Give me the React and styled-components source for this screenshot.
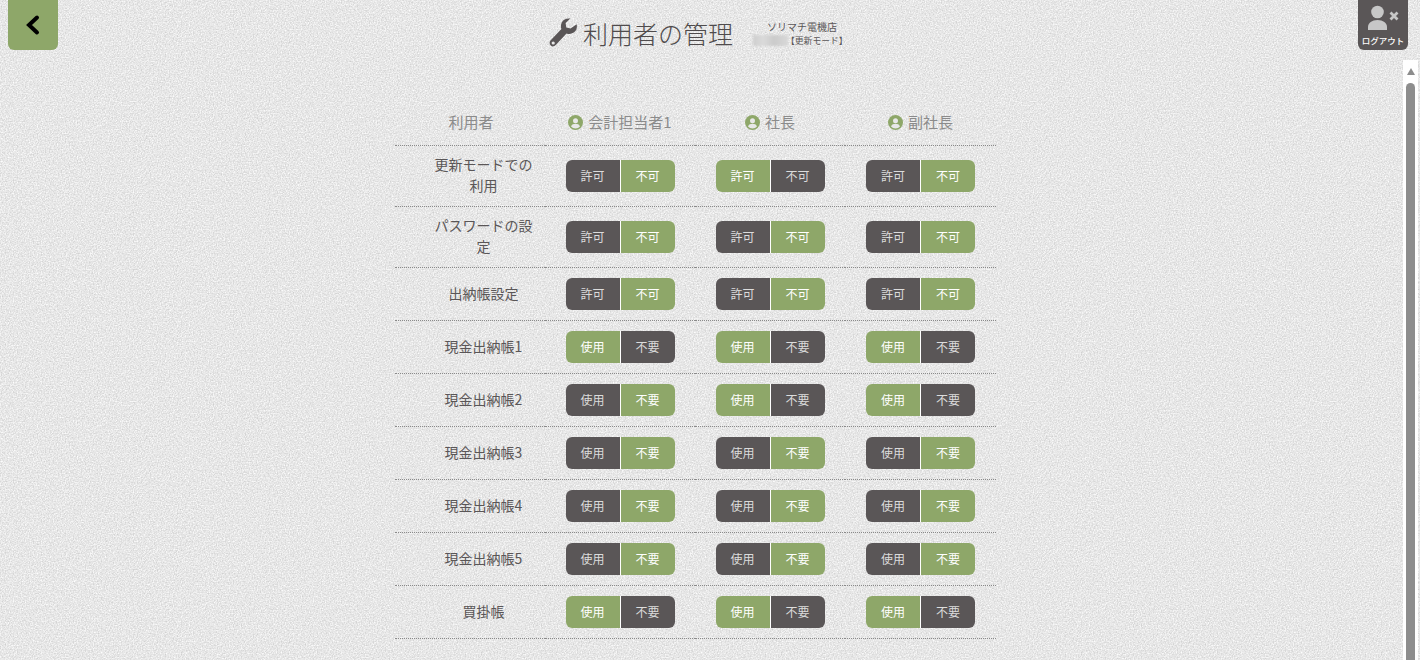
import React from "react";
import styled, { createGlobalStyle } from "styled-components";

const noise = `url("data:image/svg+xml,%3Csvg xmlns='http://www.w3.org/2000/svg' width='300' height='300'%3E%3Cfilter id='n' color-interpolation-filters='sRGB'%3E%3CfeTurbulence type='fractalNoise' baseFrequency='.75' numOctaves='3' stitchTiles='stitch'/%3E%3CfeColorMatrix values='.26 0 0 0 .775 .26 0 0 0 .775 .26 0 0 0 .775 0 0 0 0 1'/%3E%3C/filter%3E%3Crect width='300' height='300' filter='url(%23n)'/%3E%3C/svg%3E")`;

const Global = createGlobalStyle`
  html, body { margin: 0; height: 100%; overflow: hidden; }
  body {
    background: #e8e8e8 ${noise};
    font-family: "Noto Sans CJK JP", "Noto Sans", sans-serif;
    color: #5a5657;
  }
`;

const Page = styled.div`
  height: 660px;
  display: flex;
  flex-direction: column;
  overflow: hidden;
`;

const Header = styled.header`
  height: 60px;
  flex: none;
  display: flex;
  align-items: flex-start;
  padding: 0 12px 0 8px;
`;

const BackButton = styled.button`
  width: 50px;
  height: 50px;
  flex: none;
  border: 0;
  padding: 0;
  border-radius: 0 0 6px 6px;
  background: #8ea769;
  display: flex;
  align-items: center;
  justify-content: center;
`;

const TitleArea = styled.div`
  flex: 1;
  display: flex;
  align-items: flex-start;
  padding: 17px 0 0 490px;
`;

const Title = styled.h1`
  margin: 0;
  display: flex;
  align-items: center;
  gap: 5px;
  font-size: 25px;
  line-height: 32px;
  font-weight: 300;
  color: #4f4b4c;
  white-space: nowrap;
`;

const Shop = styled.div`
  margin: 4px 0 0 20px;
  width: 100px;
`;

const ShopName = styled.div`
  font-size: 10px;
  line-height: 12px;
  padding-left: 14px;
`;

const ModeLine = styled.div`
  display: flex;
  align-items: center;
  margin-top: 1px;
  font-size: 8.800px;
  line-height: 13px;
  white-space: nowrap;
`;

const Blur = styled.span`
  width: 35px;
  height: 11px;
  flex: none;
  margin-right: -2px;
  background: linear-gradient(90deg, #cfcfcf, #dadada 30%, #cbcbcb 60%, #d8d8d8);
  filter: blur(1px);
`;

const LogoutButton = styled.button`
  width: 50px;
  height: 50px;
  flex: none;
  border: 0;
  padding: 3px 0 0;
  border-radius: 0 0 6px 6px;
  background: #5a5657;
  color: #fff;
  font: 500 8.500px/10px "Noto Sans CJK JP", sans-serif;
  display: flex;
  flex-direction: column;
  align-items: center;
  gap: 4px;
  white-space: nowrap;
`;

const Body = styled.div`
  flex: 1;
  min-height: 0;
  display: flex;
`;

const Content = styled.main`
  flex: 1;
  padding: 40px 0 0 395px;
`;

const Table = styled.table`
  width: 601px;
  border-collapse: collapse;
  table-layout: fixed;
  font-size: 14px;
`;

const HeadCell = styled.th`
  height: 45px;
  padding: 0 0 2px ${(p) => (p.$first ? 2 : 0)}px;
  box-sizing: border-box;
  font-size: 15px;
  font-weight: 400;
  color: #8b8b8b;
  text-align: center;
  border-bottom: 1px dotted #8a8a8a;
`;

const HeadInner = styled.span`
  display: flex;
  justify-content: center;
  align-items: center;
  gap: 5px;
  padding-top: 1px;
`;

const UserIcon = styled.svg`
  flex: none;
  margin-top: 2px;
`;

const LabelCell = styled.td`
  height: ${(p) => p.$h}px;
  padding: 0 12px 1px 39px;
  box-sizing: border-box;
  line-height: 21px;
  text-align: center;
  color: #5a5657;
  border-bottom: 1px dotted #8a8a8a;
`;

const ToggleCell = styled.td`
  padding: 0;
  text-align: center;
  border-bottom: 1px dotted #8a8a8a;
`;

const Toggle = styled.div`
  width: 109px;
  height: 32px;
  margin: 0 auto;
  display: flex;
  gap: 1px;
  border-radius: 6px;
  overflow: hidden;
  background: #fff;
`;

const ToggleOption = styled.span`
  flex: 1;
  display: flex;
  align-items: center;
  justify-content: center;
  font-size: 12px;
  line-height: 30px;
  background: ${(p) => (p.$on ? "#8ea769" : "#5a5657")};
  color: ${(p) => (p.$on ? "#fff" : "#dcdcdc")};
`;

const Scrollbar = styled.div`
  width: 15px;
  flex: none;
  margin-right: 2px;
  background: #fff;
  display: flex;
  flex-direction: column;
  align-items: center;
  padding-top: 8px;
  gap: 8px;
`;

const ScrollArrow = styled.div`
  width: 0;
  height: 0;
  flex: none;
  border-left: 4.500px solid transparent;
  border-right: 4.500px solid transparent;
  border-bottom: 7px solid #8d8d8d;
`;

const ScrollThumb = styled.div`
  flex: 1;
  width: 9px;
  border-radius: 4.500px 4.500px 0 0;
  background: #8d8d8d;
`;

const User = () => (
  <UserIcon width="15" height="15" viewBox="0 0 24 24" aria-hidden="true">
    <circle cx="12" cy="12" r="12" fill="#8ea769" />
    <circle cx="12" cy="9.2" r="4" fill="#e8e8e8" />
    <path d="M4.8 18.2c1-3 4-4.2 7.2-4.2s6.200 1.200 7.200 4.200A10 10 0 0 1 12 21.500a10 10 0 0 1-7.200-3.300z" fill="#e8e8e8" />
  </UserIcon>
);

const rows = [
  ["更新モードでの利用", 61, "許可", "不可", [0, 1, 0]],
  ["パスワードの設定", 61, "許可", "不可", [0, 0, 0]],
  ["出納帳設定", 53, "許可", "不可", [0, 0, 0]],
  ["現金出納帳1", 53, "使用", "不要", [1, 1, 1]],
  ["現金出納帳2", 53, "使用", "不要", [0, 1, 1]],
  ["現金出納帳3", 53, "使用", "不要", [0, 0, 0]],
  ["現金出納帳4", 53, "使用", "不要", [0, 0, 0]],
  ["現金出納帳5", 53, "使用", "不要", [0, 0, 0]],
  ["買掛帳", 53, "使用", "不要", [1, 1, 1]],
];

export default function App() {
  return (
    <>
      <Global />
      <Page>
        <Header>
          <BackButton aria-label="戻る">
            <svg width="20" height="26" viewBox="0 0 20 26">
              <path d="M14 5.500 6 13l8 7.500" fill="none" stroke="#000" strokeWidth="4" strokeLinecap="round" strokeLinejoin="miter" />
            </svg>
          </BackButton>
          <TitleArea>
            <Title>
              <svg width="30" height="30" viewBox="0 0 30 30" aria-hidden="true">
                <path fill="#5a5657" d="M28.700 6.300c.4 1.800.3 3.800-.5 5.500-1.800 3.600-6 5-9.700 3.600L7.500 27.300c-1.300 1.400-3.400 1.500-4.800.2-1.400-1.300-1.500-3.500-.2-4.900L13.400 11c-1.200-3.300-.1-7.100 2.800-9.200 1.800-1.300 4-1.700 6.100-1.200l-4.700 4.400.7 4.400 4.300 1.200z" />
                <circle cx="5.200" cy="25" r="1.600" fill="#e8e8e8" />
              </svg>
              利用者の管理
            </Title>
            <Shop>
              <ShopName>ソリマチ電機店</ShopName>
              <ModeLine>
                <Blur />
                【更新モード】
              </ModeLine>
            </Shop>
          </TitleArea>
          <LogoutButton>
            <svg width="36" height="28" viewBox="0 0 36 28" aria-hidden="true">
              <circle cx="12.500" cy="9" r="6.300" fill="#c7c7c7" />
              <path d="M3 27v-3c0-4 4-7 9.500-7s9.500 3 9.500 7v3z" fill="#c7c7c7" />
              <path d="M25.500 9.500l7 7M32.500 9.500l-7 7" stroke="#c7c7c7" strokeWidth="2.800" />
            </svg>
            ログアウト
          </LogoutButton>
        </Header>
        <Body>
          <Content>
            <Table>
              <colgroup>
                <col style={{ width: 150 }} />
                <col style={{ width: 150 }} />
                <col style={{ width: 150 }} />
                <col style={{ width: 151 }} />
              </colgroup>
              <thead>
                <tr>
                  <HeadCell $first>利用者</HeadCell>
                  {["会計担当者1", "社長", "副社長"].map((n) => (
                    <HeadCell key={n}>
                      <HeadInner><User />{n}</HeadInner>
                    </HeadCell>
                  ))}
                </tr>
              </thead>
              <tbody>
                {rows.map(([label, h, a, b, states]) => (
                  <tr key={label}>
                    <LabelCell $h={h}>{label}</LabelCell>
                    {states.map((on, i) => (
                      <ToggleCell key={i}>
                        <Toggle>
                          <ToggleOption $on={!!on}>{a}</ToggleOption>
                          <ToggleOption $on={!on}>{b}</ToggleOption>
                        </Toggle>
                      </ToggleCell>
                    ))}
                  </tr>
                ))}
              </tbody>
            </Table>
          </Content>
          <Scrollbar>
            <ScrollArrow />
            <ScrollThumb />
          </Scrollbar>
        </Body>
      </Page>
    </>
  );
}
